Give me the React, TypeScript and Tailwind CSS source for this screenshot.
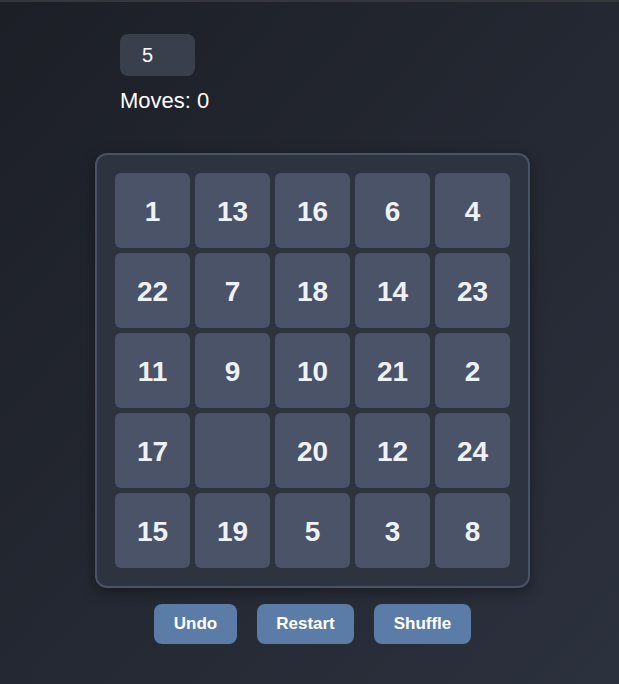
import { useState } from "react";

const initialTiles = [1, 13, 16, 6, 4, 22, 7, 18, 14, 23, 11, 9, 10, 21, 2, 17, 0, 20, 12, 24, 15, 19, 5, 3, 8];

export default function App() {
  const [size, setSize] = useState("5");
  const [tiles] = useState(initialTiles);
  const [moves] = useState(0);

  return (
    <div
      className="min-h-[684px] w-full bg-gradient-to-br from-[#1c1f26] to-[#2c313e] border-t-2 border-[#36373c]"
      style={{ fontFamily: "Arial, 'Liberation Sans', sans-serif" }}
    >
      <div className="pl-[95px] pt-[32px]">
        {/* Controls */}
        <div className="pl-[25px]">
          <input
            value={size}
            onChange={(e) => setSize(e.target.value)}
            className="w-[75px] h-[42px] rounded-lg bg-[#3a3f4c] pl-[22px] text-[20px] text-white outline-none"
          />
          <div className="mt-[12px] text-[22px] text-white leading-[26px]">Moves: {moves}</div>
        </div>

        {/* Board */}
        <div className="mt-[39px] w-[435px] rounded-xl border-2 border-[#4a5266] bg-[#2e3340] p-[18px] shadow-[0_4px_14px_rgba(0,0,0,0.35)]">
          <div className="grid grid-cols-5 gap-[5px]">
            {tiles.map((t, i) =>
              t === 0 ? (
                <div key={i} className="h-[75px] rounded-md bg-[#4a5367]" />
              ) : (
                <div
                  key={i}
                  className="flex h-[75px] items-center justify-center rounded-md bg-[#4a5367] pt-[3px] text-[28px] font-bold text-[#eef1f6]"
                >
                  {t}
                </div>
              )
            )}
          </div>
        </div>

        {/* Buttons */}
        <div className="mt-[16px] flex w-[435px] justify-center gap-5">
          <button className="h-10 w-[83px] rounded-lg bg-[#5b7ca6] text-[17px] font-bold text-white">Undo</button>
          <button className="h-10 w-[97px] rounded-lg bg-[#5b7ca6] text-[17px] font-bold text-white">Restart</button>
          <button className="h-10 w-[97px] rounded-lg bg-[#5b7ca6] text-[17px] font-bold text-white">Shuffle</button>
        </div>
      </div>
    </div>
  );
}
